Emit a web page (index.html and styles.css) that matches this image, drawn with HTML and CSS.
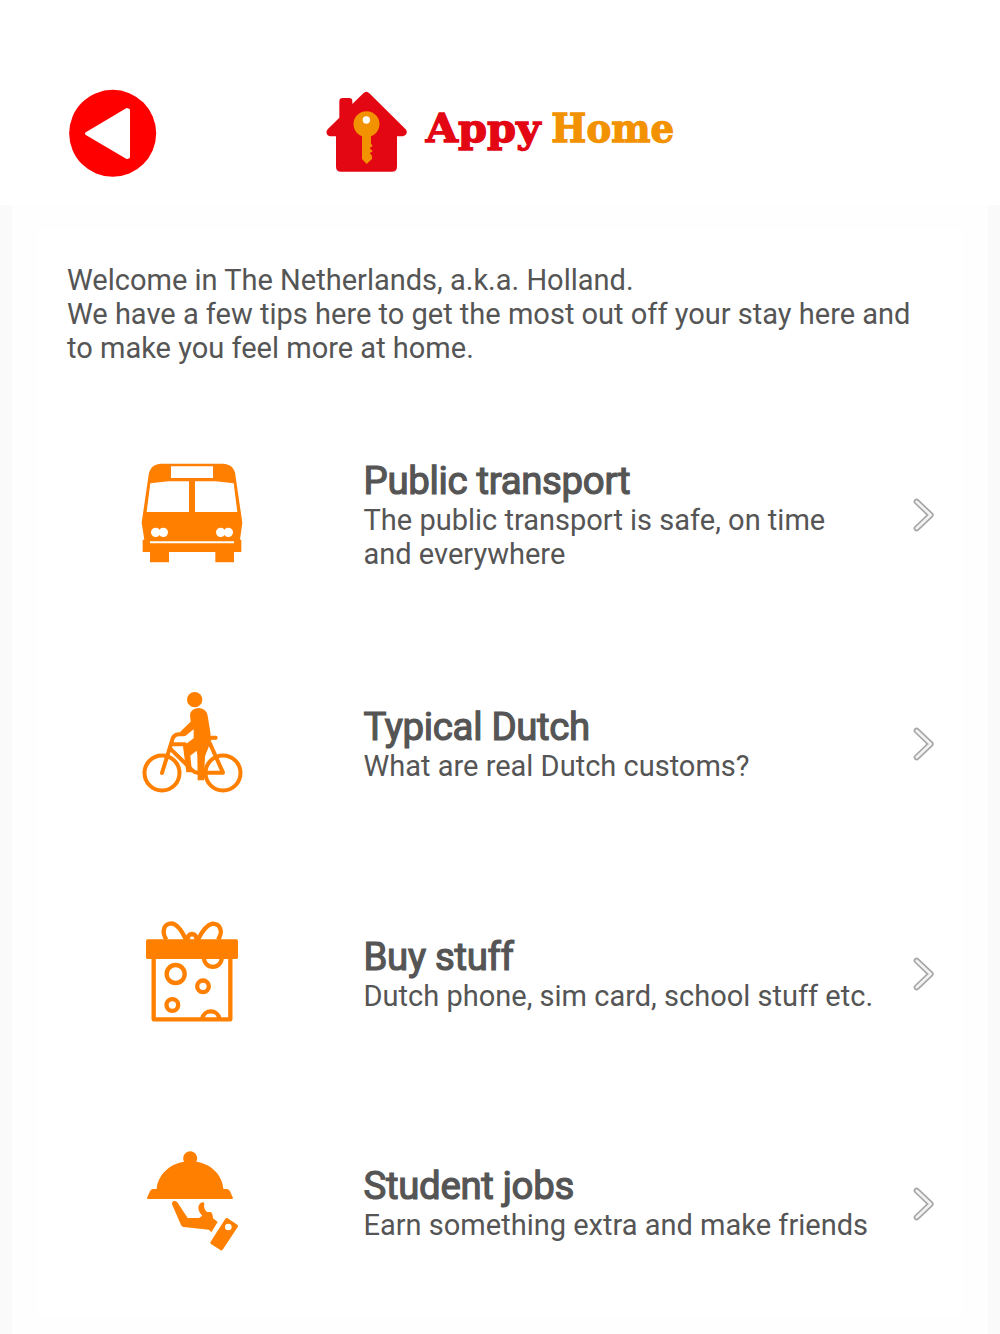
FILE: index.html
```html
<!DOCTYPE html>
<html lang="en">
<head>
<meta charset="utf-8">
<title>Appy Home</title>
<link rel="stylesheet" href="styles.css">
</head>
<body>
<header class="topbar">
  <a class="back" href="#" aria-label="Back">
    <svg viewBox="0 0 330 330"><circle cx="158" cy="160" r="130.500" fill="#f00"/><path d="M80 161 201 89 205 91V231L201 232Z" fill="#fff" stroke="#fff" stroke-width="10" stroke-linejoin="round"/></svg>
  </a>
  <svg class="logo" viewBox="0 0 1110 330" role="img" aria-label="Appy Home">
    <path fill="#e30613" d="M58 113V64Q58 54 68 54H87Q97 54 97 64V72L130 40Q139 31 148 40L257 148Q262 153 260 160Q257 168 249 169H231V260Q231 275 216 275H63Q48 275 48 260V169H30Q23 168 20 161Q18 153 23 148Z"/>
    <path fill="#f39200" d="M126 169A39 39 0 1 1 153 169V191L158 197 149 205 157 212V215L149 219 156 227V237L140 252 126 237Z"/>
    <circle cx="139" cy="120" r="11" fill="#fff"/>
    <text class="word red" x="317" y="185" textLength="344" lengthAdjust="spacingAndGlyphs">Appy</text>
    <text class="word amber" x="694" y="185" textLength="368" lengthAdjust="spacingAndGlyphs">Home</text>
  </svg>
</header>
<main class="page">
  <p class="intro">Welcome in The Netherlands, a.k.a. Holland.<br>We have a few tips here to get the most out off your stay here and<br>to make you feel more at home.</p>
  <a class="row" href="#">
    <svg class="icon" viewBox="0 5 375 375">
      <path fill-rule="evenodd" d="M91 40H281Q315 43 317 80L337 217 330 268H334V305H312V336H256V305H117V336H60V305H38V268H43L35 217 55 80Q58 43 91 40ZM123 48V83H249V48ZM61 99 50 185H177V93H115ZM195 93V185H322L311 99 257 93Z"/>
      <g fill="#fff"><circle cx="77" cy="246" r="14"/><circle cx="100" cy="246" r="14"/><circle cx="272" cy="246" r="14"/><circle cx="295" cy="246" r="14"/><path d="M60 273H312V279H60Z"/></g>
    </svg>
    <div class="copy"><h2>Public transport</h2><p>The public transport is safe, on time<br>and everywhere</p></div>
    <svg class="chevron" viewBox="0 0 72 108"><path class="edge" d="M11 14 53 54 11 94"/><path class="core" d="M11 14 53 54 11 94"/></svg>
  </a>
  <a class="row" href="#">
    <svg class="icon" viewBox="0 5 375 375">
      <circle cx="194" cy="58" r="23"/>
      <path d="M180 103Q184 83 207 83Q229 85 233 106L242 162 239 177H261V167H245V177L238 195 225 228 222 300H203L202 225 200 211 181 226 186 276H169L159 198 191 174V147L166 167H145L153 152 182 124Z"/>
      <g fill="none" stroke="#ff8000" stroke-width="12" stroke-linejoin="round" stroke-linecap="round"><circle cx="96" cy="278" r="52.500"/><circle cx="279" cy="278" r="52.500"/><path d="M96 278 126 181Q130 162 147 162H160"/><path d="M127 192H165M123 207 188 271Q195 278 204 277H279L240 190M239 172H257"/></g>
    </svg>
    <div class="copy"><h2>Typical Dutch</h2><p>What are real Dutch customs?</p></div>
    <svg class="chevron" viewBox="0 0 72 108"><path class="edge" d="M11 14 53 54 11 94"/><path class="core" d="M11 14 53 54 11 94"/></svg>
  </a>
  <a class="row" href="#">
    <svg class="icon" viewBox="0 2 375 375">
      <rect x="48" y="87" width="276" height="59" rx="5"/>
      <g fill="none" stroke="#ff8000" stroke-width="13" stroke-linejoin="round"><path d="M71 140V327H301V140"/><circle cx="137" cy="191" r="27"/><circle cx="219" cy="228" r="17.500"/><circle cx="127" cy="284" r="17.500"/><path d="M222 143A26 26 0 0 0 275 143M217 324A26 26 0 0 1 268 324"/><path d="M168 88Q147 42 125 39C101 39 94 64 109 88M204 88Q225 45 247 40C272 40 280 64 264 88M174 88V81Q176 72 186 71Q196 72 199 81V88M164 80 174 88M208 80 198 88"/></g>
    </svg>
    <div class="copy"><h2>Buy stuff</h2><p>Dutch phone, sim card, school stuff etc.</p></div>
    <svg class="chevron" viewBox="0 0 72 108"><path class="edge" d="M11 14 53 54 11 94"/><path class="core" d="M11 14 53 54 11 94"/></svg>
  </a>
  <a class="row" href="#">
    <svg class="icon" viewBox="0 3 375 375">
      <path d="M162 65A21 21 0 1 1 199 65C245 72 278 106 280 147H291Q297 148 300 154L309 174Q309 177 305 177H54Q50 177 51 173L60 154Q62 148 68 147H80C83 106 117 72 162 65Z"/>
      <path d="M126 193Q125 184 133 183Q139 182 143 188L173 234H207L217 227Q205 216 205 202C206 192 214 186 221 187Q225 191 222 199Q224 213 232 216H242Q248 218 249 235L263 246 244 277 237 269 160 261Q155 260 153 255Z"/>
      <path fill-rule="evenodd" d="M286 236Q289 233 293 235L322 254Q326 257 323 261L279 328Q276 333 271 330L243 312Q239 309 242 305ZM295 251A10 10 0 1 0 295 271A10 10 0 1 0 295 251Z"/>
    </svg>
    <div class="copy"><h2>Student jobs</h2><p>Earn something extra and make friends</p></div>
    <svg class="chevron" viewBox="0 0 72 108"><path class="edge" d="M11 14 53 54 11 94"/><path class="core" d="M11 14 53 54 11 94"/></svg>
  </a>
</main>
</body>
</html>
```
FILE: styles.css
```css
* { box-sizing: border-box; }
body {
  margin: 0;
  height: 1334px;
  overflow: hidden;
  display: flex;
  flex-direction: column;
  background: #fff;
  color: #555;
  font-family: Roboto, "Liberation Sans", sans-serif;
}
.topbar {
  flex: none;
  display: flex;
  align-items: flex-start;
  gap: 150px;
  height: 205px;
  padding: 80px 0 0 60px;
}
.back, .back svg { display: block; width: 110px; height: 110px; }
.logo { width: 370px; height: 110px; overflow: visible; }
.word {
  font-family: "DejaVu Serif", serif;
  font-weight: bold;
  font-size: 118px;
  stroke-width: 4px;
}
.red { fill: #e30613; stroke: #e30613; }
.amber { fill: #f39200; stroke: #f39200; }
.page {
  flex: 1;
  min-height: 0;
  padding: 24px 26px 0;
  border: solid #fafafa;
  border-width: 0 12px;
  background: #fefefe;
}
.intro, .copy p {
  margin: 0;
  font-size: 29.02px;
  line-height: 34.2px;
  white-space: nowrap;
}
.intro { height: 171px; padding: 34px 29px 0; background: #fff; }
.row {
  display: grid;
  grid-template-columns: 233.5px 549.5px 24px;
  align-items: center;
  height: 229.6px;
  padding-left: 92px;
  background: #fff;
  color: inherit;
  text-decoration: none;
}
.icon { width: 125px; height: 125px; fill: #ff8000; }
.copy h2 {
  margin: 0;
  font-size: 38.4px;
  font-weight: 400;
  line-height: 44px;
  letter-spacing: -0.32px;
  -webkit-text-stroke: 1.2px #555;
  white-space: nowrap;
}
.chevron { width: 24px; height: 36px; }
.chevron path { fill: none; stroke-linecap: round; stroke-linejoin: round; }
.chevron .edge { stroke: #a6a6a6; stroke-width: 18px; }
.chevron .core { stroke: #f3f3f3; stroke-width: 8px; }
```
